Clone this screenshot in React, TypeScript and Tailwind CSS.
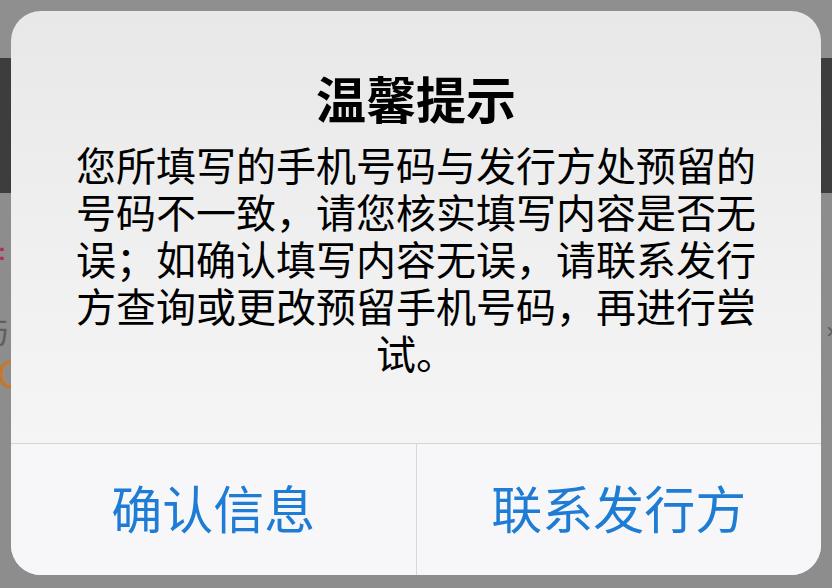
import React from "react";

const cjk = { fontFamily: '"Noto Sans CJK SC", "Noto Sans", sans-serif' };

const message =
  "您所填写的手机号码与发行方处预留的号码不一致，请您核实填写内容是否无误；如确认填写内容无误，请联系发行方查询或更改预留手机号码，再进行尝试。";

// dimmed page content that peeks out around the alert
const Backdrop = () => (
  <div className="flex flex-col h-full">
    <div className="h-[58px] bg-[#8f8f8f]" />
    <div className="h-[135px] bg-[#3d3d3d]" />
    <div className="flex-1 bg-[#8d8d8d] relative">
      <div className="flex flex-col pt-[44px]">
        <div className="flex justify-between items-center h-[30px]">
          <span className="text-[24px] font-bold text-[#b2285c] leading-none ml-[-2px]" style={{ fontFamily: '"Liberation Sans", sans-serif' }}>
            :
          </span>
        </div>
        <div className="flex justify-between items-center h-[44px] mt-[40px]">
          <span className="text-[32px] text-[#5f5f5f] leading-none ml-[-22px]" style={cjk}>
            与
          </span>
          <span className="text-[22px] text-[#5a5a5a] leading-none mr-[-2px] mt-[4px]" style={{ fontFamily: '"Liberation Sans", sans-serif' }}>
            ›
          </span>
        </div>
        <div className="flex items-center h-[40px] mt-[4px]">
          <span className="text-[42px] text-[#c27a30] leading-none ml-[-3px]" style={{ fontFamily: '"Liberation Sans", sans-serif' }}>
            C
          </span>
        </div>
      </div>
    </div>
  </div>
);

const AlertDialog = () => (
  <div
    className="absolute left-[11px] top-[11px] w-[810px] h-[564px] rounded-[30px] overflow-hidden flex flex-col bg-linear-to-b from-[#e8e8e8] via-[#f1f1f1] to-[#f8f8fa]"
    style={cjk}
  >
    <div className="flex-1 flex flex-col items-center">
      <h1 className="mt-[56px] h-[60px] leading-[60px] text-[50px] font-bold text-black">温馨提示</h1>
      <p className="mt-[14px] w-[690px] text-center text-[40px] leading-[47px] text-black">{message}</p>
    </div>
    <div className="h-[132px] border-t border-[#d5d5d8] flex bg-[#f7f7f9]">
      <button className="flex-1 flex items-center justify-center text-[51px] text-[#1e7cd4] leading-none pb-[4px]">
        确认信息
      </button>
      <div className="w-px bg-[#d8d8db]" />
      <button className="flex-1 flex items-center justify-center text-[51px] text-[#1e7cd4] leading-none pb-[4px]">
        联系发行方
      </button>
    </div>
  </div>
);

export default function App() {
  return (
    <div className="relative w-[832px] h-[588px] overflow-hidden bg-[#8d8d8d]">
      <Backdrop />
      <AlertDialog />
    </div>
  );
}
